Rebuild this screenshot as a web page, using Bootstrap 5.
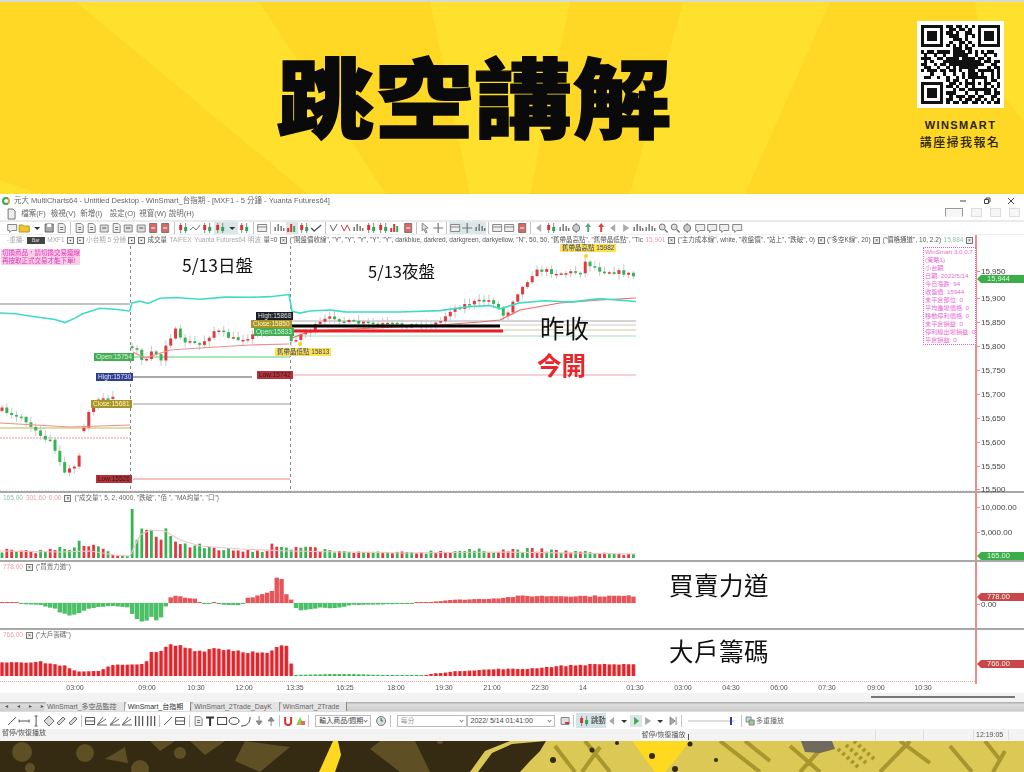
<!DOCTYPE html>
<html lang="zh-Hant">
<head>
    <meta charset="UTF-8">
    <title>跳空講解</title>
    <link href="https://cdn.jsdelivr.net/npm/bootstrap@5.3.3/dist/css/bootstrap.min.css" rel="stylesheet">
    <style>
        body { width: 1024px; height: 772px; overflow: hidden; background: #fff; font-family: "Liberation Sans", "Noto Sans CJK TC", sans-serif; }
        .hero { height: 194px; background: #ffd826; border-top: 2px solid #d8d8d8; }
        .hero-rays { position: absolute; inset: 0; width: 100%; height: 100%; }
        .hero-title { margin: 0 0 0 276px; font: 900 98px/1 "Noto Sans CJK TC", sans-serif; letter-spacing: 1px; color: #0a0a0a; -webkit-text-stroke: 1.6px #0a0a0a; transform: translateY(-4px) scaleY(.89); }
        .qr-block { width: 87px; margin: 0 20px 0 auto; color: #2b2410; transform: translateY(-13px); }
        .qr-box { background: #fff; padding: 4px; height: 87px; }
        .qr-box svg { display: block; width: 79px; height: 79px; }
        .qr-brand { font-size: 11px; font-weight: 700; letter-spacing: 1.4px; margin-top: 11px; line-height: 13px; white-space: nowrap; }
        .qr-cta { font: 500 12px/16px "Noto Sans CJK TC", sans-serif; letter-spacing: 1.4px; white-space: nowrap; margin: 2px 0 0 -1px; }

        .app { height: 547px; filter: blur(.35px); color: #666; font-size: 7px; line-height: 1; }
        .title-row { height: 13px; padding-left: 2px; font-size: 7.5px; }
        .logo-dot { width: 8px; height: 8px; border-radius: 50%; border: 2px solid #3aa655; border-right-color: #f0a020; margin-right: 4px; }
        .win-btns svg { width: 10px; height: 10px; margin-left: 14px; }
        .menu-row { height: 13px; font-size: 7.5px; padding-left: 5px; }
        .menu-row span { width: 29.5px; }
        .mdi-btns { margin-left: auto; margin-right: 4px; gap: 8px; transform: translateY(-1px); }
        .mdi-btns i { display: block; width: 11px; height: 9px; border: 1px solid #ddd; background: #f6f6f6; }
        .mdi-btns i:first-child { width: 18px; border-color: #999 #999 transparent #999; }
        .tool-row { height: 15px; padding-left: 6px; border-top: 2px solid #eaeaea; border-bottom: 1px solid #f0f0f0; }
        .tool-ic { width: 12.2px; height: 12px; display: block; flex: none; }
        .tool-row .tool-ic { width: 12.36px; }
        .tool-ic.on { background: #d9e6ea; }
        .tool-sep { flex: none; width: 1px; height: 12px; background: #c4c4c4; margin: 0 2px; }
        .info-row { height: 11px; padding-left: 7px; font-size: 6.5px; gap: 2.5px; white-space: nowrap; overflow: hidden; color: #555; position: relative; }
        .info-row::after { content: ""; position: absolute; left: 975px; top: 0; bottom: 0; width: 2px; background: #f48a8a; }
        .info-row .faint { color: #aaa; }
        .x-box { flex: none; width: 7px; height: 7px; border: 1px solid #777; background: #eee; font-size: 5px; line-height: 5px; text-align: center; color: #444; }
        .bar-pill { width: 18px; height: 7px; background: #444; color: #ddd; font-size: 5px; line-height: 7px; text-align: center; }

        .pane { border-bottom: 2px solid #a8a8a8; }
        .pane-main { height: 247px; }
        .pane-vol { height: 69px; }
        .pane-buy { height: 68px; }
        .pane-chip { height: 54px; border-bottom: 0; }
        .plot { width: 977px; flex: none; border-right: 2px solid #f48a8a; }
        .plot svg { display: block; width: 975px; height: 100%; }
        .axis { flex: 1; }
        .axis-tick { position: absolute; left: 4px; font-size: 8px; line-height: 8px; color: #444; }
        .axis-tick::before { content: ""; position: absolute; left: -4px; top: 3px; width: 3px; height: 1px; background: #f48a8a; }
        .axis-tag { position: absolute; left: 4px; right: 0; height: 8px; font-size: 7.5px; line-height: 8px; color: #e4f5e4; padding-left: 6px; }
        .axis-tag::before { content: ""; position: absolute; left: -4px; top: 0; border: 4px solid transparent; border-left: 0; border-right: 4px solid currentColor; }
        .tag-green { background: #3bae49; }
        .tag-green::before { color: #3bae49; }
        .tag-red { background: #c9474b; }
        .tag-red::before { color: #c9474b; }
        .pane-legend { position: absolute; left: 3px; top: 0; height: 10px; gap: 3px; font-size: 6.5px; color: #666; white-space: nowrap; }

        .px-label { position: absolute; height: 8px; padding: 0 2px; font-size: 6.5px; line-height: 8px; white-space: nowrap; }
        .lb-green { background: #43ad55; color: #d8f5d8; }
        .lb-navy { background: #2d3f8e; color: #e4e4f4; }
        .lb-gold { background: #a8952a; color: #fff6c8; }
        .lb-red { background: #b83038; color: #222; }
        .lb-dark { background: #1d1d28; color: #ddd; }
        .lb-yellow { background: #ffe24a; color: #2d3f8e; }
        .mark-dot { position: absolute; width: 4px; height: 4px; border-radius: 50%; background: #ffcf20; }
        .note-text { position: absolute; font-family: "Noto Sans CJK TC", sans-serif; color: #111; line-height: 1; white-space: nowrap; }
        .note-day { left: 182px; top: 10px; font-size: 17.5px; }
        .note-night { left: 368px; top: 17px; font-size: 16.5px; }
        .note-prev { left: 540px; top: 70px; font-size: 24.5px; }
        .note-open { left: 537px; top: 107px; font-size: 24.5px; font-weight: 700; color: #e8272c; }
        .note-wide { left: 669px; font-size: 24.5px; letter-spacing: .5px; }
        .warn-box { position: absolute; left: 1px; top: 3px; width: 79px; background: #f9cfe4; color: #df34c0; font-size: 6.5px; line-height: 8px; padding-left: 1px; }
        .trade-box { position: absolute; left: 923px; top: 1px; width: 53px; height: 98px; padding: 0 1px; border: 1px dotted #e95cc4; background: #fff; color: #e86ad0; font-size: 6.2px; line-height: 8px; white-space: nowrap; }

        .time-row { height: 9px; font-size: 7px; color: #555; }
        .time-row span { position: absolute; top: 0; transform: translateX(-50%); }
        .scroll-row { height: 9px; background: #f3f3f3; }
        .scroll-thumb { position: absolute; left: 871px; top: 3px; width: 144px; height: 2px; background: #777; }
        .tabs-row { height: 9px; background: linear-gradient(#aaa, #ddd 30%, #ccc); padding-left: 4px; font-size: 7px; color: #666; }
        .tab-arrows { width: 40px; gap: 7px; font-size: 5px; color: #555; }
        .sheet-tab { height: 9px; padding: 0 7px 0 3px; background: #e4e4e4; border-right: 1px solid #888; line-height: 9px; white-space: nowrap; clip-path: polygon(2px 0, 100% 0, 100% 100%, 0 100%); }
        .sheet-tab.active { background: #fff; color: #333; }
        .draw-row { height: 18px; padding-left: 6px; border-top: 1px solid #ddd; }
        .combo-box { flex: none; height: 12px; border: 1px solid #bbb; background: #fff; font-size: 7px; line-height: 10px; padding-left: 3px; color: #444; white-space: nowrap; position: relative; }
        .combo-box::after { content: ""; position: absolute; right: 3px; top: 3px; width: 3px; height: 3px; border: solid #888; border-width: 0 1px 1px 0; transform: rotate(45deg); }
        .hit-btn { flex: none; width: 30px; height: 15px; background: #d3e3e6; font-size: 7.5px; color: #333; gap: 1px; padding-left: 2px; white-space: nowrap; }
        .slide-track { flex: none; width: 47px; height: 2px; background: #ddd; position: relative; }
        .slide-thumb { position: absolute; right: 3px; top: -3px; width: 2px; height: 8px; background: #2d3f9e; }
        .status-row { height: 12px; background: #f3f3f3; font-size: 7px; padding-left: 2px; color: #555; }
        .status-cell { position: absolute; top: 1px; bottom: 1px; border-left: 1px solid #ddd; padding-left: 2px; line-height: 10px; }
        .tip-box { position: absolute; left: 640px; top: 0; width: 47px; height: 12px; background: #fafafa; line-height: 12px; text-align: center; }
        .tip-cursor { position: absolute; left: 688px; top: 5px; width: 1px; height: 6px; background: #555; }
        .strip { height: 31px; background: #352b12; }
        .strip svg { display: block; width: 100%; height: 100%; }
    </style>
</head>
<body>

    <!-- Yellow title banner -->
    <header class="hero position-relative d-flex align-items-center overflow-hidden">
        <svg class="hero-rays" viewBox="0 0 1024 192" preserveAspectRatio="none">
            <polygon fill="#ffe02c" points="76,0 259,0 386,192 308,192" />
            <polygon fill="#ffe02c" points="430,0 570,0 530,192 470,192" />
            <polygon fill="#ffe02c" points="683,0 830,0 745,192 630,192" />
            <polygon fill="#ffe02c" points="975,0 1024,0 1024,120 985,70" />
            <polygon fill="#ffe02c" points="0,178 40,192 0,192" />
        </svg>
        <h1 class="hero-title position-relative">跳空講解</h1>
        <div class="qr-block position-relative text-center">
            <div class="qr-box"><svg id="qr" viewBox="0 0 25 25" shape-rendering="crispEdges"></svg></div>
            <div class="qr-brand">WINSMART</div>
            <div class="qr-cta">講座掃我報名</div>
        </div>
    </header>

    <!-- MultiCharts window -->
    <main class="app d-flex flex-column">
        <div class="title-row d-flex align-items-center">
            <span class="logo-dot"></span>
            <span>元大 MultiCharts64 - Untitled Desktop - WinSmart_台指期 - [MXF1 - 5 分鐘 - Yuanta Futures64]</span>
            <div class="win-btns ms-auto me-2 d-flex">
                <svg viewBox="0 0 10 10"><path d="M2 5h6" stroke="#444" /></svg>
                <svg viewBox="0 0 10 10"><path d="M2.500 3.500h4v4h-4zM4 3.500V2h4v4H6.500" fill="none" stroke="#444" /></svg>
                <svg viewBox="0 0 10 10"><path d="M2 2l6 6M8 2l-6 6" stroke="#444" /></svg>
            </div>
        </div>
        <div class="menu-row d-flex align-items-center">
            <svg class="tool-ic me-1" viewBox="0 0 12 12"><path d="M3 1h5l2 2v8H3z" fill="#eee" stroke="#777" /></svg>
            <span>檔案(F)</span><span>檢視(V)</span><span>新增(I)</span><span>設定(O)</span><span>視窗(W)</span><span>說明(H)</span>
            <div class="mdi-btns d-flex"><i></i><i></i><i></i><i></i></div>
        </div>
        <div class="tool-row d-flex align-items-center" id="toolRow"></div>
        <div class="info-row d-flex align-items-center">
            <span class="faint">-重播-</span><span class="bar-pill">Bar</span><span class="faint">MXF1</span><span class="x-box">▪</span><span class="x-box">▪</span>
            <span class="faint">小台期 5 分鐘</span><span class="x-box">▪</span><span class="x-box">▪</span><span>成交量</span><span class="faint">TAIFEX</span><span class="faint">Yuanta Futures64</span><span class="faint">明波</span><span>量=0</span><span class="x-box">×</span>
            <span>("開盤價收線", "Y", "Y", "Y", "Y", "Y", darkblue, darkred, darkgreen, darkyellow, "N", 50, 50, "舊帶晶高點", "舊帶晶低點", "Tic</span><span class="text-danger opacity-50">15,901</span><span class="x-box">×</span>
            <span>("主力成本線", white, "收盤價", "站上", "跌破", 0)</span><span class="x-box">×</span><span>("多空K線", 20)</span><span class="x-box">×</span><span>("價格通道", 10, 2.2)</span><span class="text-success opacity-50">15,884</span><span class="x-box">×</span>
        </div>

        <section class="pane pane-main d-flex">
            <div class="plot position-relative">
                <svg id="mainPlot"></svg>
                <div class="warn-box">切換商品，請切換交易連線<br>再按取正式交易才能下單!</div>
                <span class="note-text note-day">5/13日盤</span>
                <span class="note-text note-night">5/13夜盤</span>
                <span class="note-text note-prev">昨收</span>
                <span class="note-text note-open">今開</span>
                <span class="px-label lb-green" style="left:94px;top:107px">Open:15754</span>
                <span class="px-label lb-navy" style="left:96px;top:127px">High:15730</span>
                <span class="px-label lb-gold" style="left:91px;top:154px">Close:15681</span>
                <span class="px-label lb-red" style="left:96px;top:229px">Low:15526</span>
                <span class="px-label lb-dark" style="left:256px;top:66px">High:15868</span>
                <span class="px-label lb-gold" style="left:251px;top:74px">Close:15850</span>
                <span class="px-label lb-green" style="left:254px;top:82px">Open:15833</span>
                <span class="px-label lb-red" style="left:257px;top:125px">Low:15742</span>
                <span class="px-label lb-yellow" style="left:275px;top:102px">舊帶晶低點 15813</span>
                <span class="px-label lb-yellow" style="left:560px;top:-2px">舊帶晶高點 15982</span>
                <i class="mark-dot" style="left:298px;top:96px"></i>
                <i class="mark-dot" style="left:584px;top:8px"></i>
                <div class="trade-box">WinSmart 3.0.0.7<br>(策略1)<br>小台期<br>日期: 2022/5/14<br>今日漲跌: 94<br>收盤價: 15944<br>未平倉部位: 0<br>平均進場價格: 0<br>移動停利價格: 0<br>未平倉損益: 0<br>停利線出場損益: 0<br>平倉損益: 0</div>
            </div>
            <div class="axis position-relative" id="mainAxis"><span class="axis-tag tag-green" style="top:29px">15,944</span></div>
        </section>

        <section class="pane pane-vol d-flex">
            <div class="plot position-relative">
                <svg id="volPlot"></svg>
                <div class="pane-legend d-flex align-items-center"><span class="text-success opacity-50">165.00</span><span class="text-danger opacity-50">301.60</span><span class="text-danger opacity-50">0.00</span><span class="x-box">×</span><span>("成交量", 5, 2, 4000, "跌破", "佰 ", "MA均量", "口")</span></div>
            </div>
            <div class="axis position-relative">
                <span class="axis-tick" style="top:11px">10,000.00</span>
                <span class="axis-tick" style="top:36px">5,000.00</span>
                <span class="axis-tag tag-green" style="top:59px">165.00</span>
            </div>
        </section>

        <section class="pane pane-buy d-flex">
            <div class="plot position-relative">
                <svg id="buyPlot"></svg>
                <div class="pane-legend d-flex align-items-center"><span class="text-danger opacity-50">778.00</span><span class="x-box">×</span><span>("買賣力道")</span></div>
                <span class="note-text note-wide" style="top:11px">買賣力道</span>
            </div>
            <div class="axis position-relative">
                <span class="axis-tag tag-red" style="top:31px">778.00</span>
                <span class="axis-tick" style="top:39px">0.00</span>
            </div>
        </section>

        <section class="pane pane-chip d-flex">
            <div class="plot position-relative">
                <svg id="chipPlot"></svg>
                <div class="pane-legend d-flex align-items-center"><span class="text-danger opacity-50">766.00</span><span class="x-box">×</span><span>("大戶籌碼")</span></div>
                <span class="note-text note-wide" style="top:9px">大戶籌碼</span>
            </div>
            <div class="axis position-relative"><span class="axis-tag tag-red" style="top:30px">766.00</span></div>
        </section>

        <div class="time-row position-relative" id="timeRow"></div>
        <div class="scroll-row position-relative"><div class="scroll-thumb"></div></div>
        <div class="tabs-row d-flex align-items-center">
            <div class="tab-arrows d-flex"><span>◄</span><span>◄</span><span>►</span><span>►</span></div>
            <span class="sheet-tab">WinSmart_多空品監控</span>
            <span class="sheet-tab active">WinSmart_台指期</span>
            <span class="sheet-tab">WinSmart_2Trade_DayK</span>
            <span class="sheet-tab">WinSmart_2Trade</span>
        </div>
        <div class="draw-row d-flex align-items-center" id="drawRow"></div>
        <div class="status-row position-relative">
            <span>暫停/恢復播放</span>
            <span class="status-cell" style="left:875px"></span>
            <span class="status-cell" style="left:923px"></span>
            <span class="status-cell" style="left:973px">12:19:05</span>
            <span class="status-cell" style="left:1008px"></span>
            <div class="tip-box">暫停/恢復播放</div>
            <i class="tip-cursor"></i>
        </div>
    </main>

    <!-- Circuit board strip at the bottom -->
    <footer class="strip">
        <svg viewBox="0 0 1024 31" preserveAspectRatio="none">
            <g fill="#5e4f24">
                <circle cx="22" cy="11" r="10" /><circle cx="85" cy="12" r="9" /><circle cx="140" cy="28" r="9" />
                <circle cx="180" cy="12" r="6" /><circle cx="30" cy="27" r="5" />
                <polygon points="190,0 225,0 205,14" /><polygon points="245,0 290,6 260,31 235,20" />
                <polygon points="150,0 175,0 160,10" /><polygon points="105,18 125,6 128,22" />
                <circle cx="440" cy="0" r="3" /><polygon points="370,8 400,31 430,31 415,0 380,0" />
            </g>
            <polygon fill="#ffd91f" points="333,0 338,0 341,14 335,31 319,31" />
            <polygon fill="#dcc855" points="470,31 485,10 510,0 1024,0 1024,31" />
            <polygon fill="#352b12" points="478,31 492,12 512,3 546,0 540,10 530,20 520,31" />
            <polygon fill="#ffd91f" points="632,0 690,0 676,18 665,31 655,31" />
            <g fill="none" stroke="#a8962e" stroke-width="4">
                <path d="M555 5l20 26M585 0l25 31M600 6l-18 25M720 0l40 31M745 0l25 20M790 5l30 26M800 31l28-31" />
                <path d="M880 31l30-31M900 0l30 22M950 5l22 26M985 0l16 20M1005 10l-12 21" />
                <path d="M838 8l20 18M846 4l20 18M854 0l20 18" stroke-dasharray="3 3" />
            </g>
            <polygon fill="#6f6a5c" points="801,0 832,0 835,8 820,12 805,11" />
            <g fill="#352b12"><circle cx="652" cy="15" r="3" /><circle cx="690" cy="3" r="2.500" /><circle cx="675" cy="28" r="3" /><circle cx="716" cy="19" r="2" /><circle cx="553" cy="19" r="3" /><circle cx="592" cy="9" r="2.500" /><circle cx="617" cy="2" r="2" /></g>
        </svg>
    </footer>

    <script src="https://cdn.jsdelivr.net/npm/bootstrap@5.3.3/dist/js/bootstrap.bundle.min.js"></script>
    <script>
        // QR modules read off the reference
        const QR = ["1111111011011010101111111","1000001001101101001000001","1011101011010011001011101","1011101001110010101011101","1011101000111010001011101","1000001001001101001000001","1111111010101010101111111","0000000000111011000000000","1011011110111101010101100","0100100100111110010010010","1110011011110111101101000","0101000111111111111011011","1100101101111111111100110","0110010010101111110001011","1011101101101001101111101","0001000100100101110100101","0110010010010101111110101","0000000010110010100010110","1111111001101011101011001","1000001011010010100010101","1011101000101101111111010","1011101011100010010011011","1011101001011101101100110","1000001011001011011010101","1111111010110110110101011"];
        document.getElementById("qr").innerHTML = QR.map((row, y) =>
            [...row].map((c, x) => c === "1" ? `<rect x="${x}" y="${y}" width="1.02" height="1.02" fill="#111"/>` : "").join("")).join("");

        // Small toolbar icons, 12x12 box
        const ICONS = {
            chat: '<path d="M1.500 2.500h9v6h-5l-2 2v-2h-2z" fill="#eee" stroke="#888"/>',
            folder: '<path d="M1 3h4l1 1h5v6H1z" fill="#f0c52c" stroke="#b8962a"/>',
            drop: '<path d="M3 5h6L6 8z" fill="#333"/>',
            save: '<path d="M2 2h8v8H2z" fill="#aaa" stroke="#666"/><path d="M4 2h4v3H4z" fill="#fff"/>',
            doc: '<path d="M3 1.500h5l2 2v7H3z" fill="#eee" stroke="#888"/><path d="M5 5.500h3M5 7.500h3" stroke="#777"/>',
            docr: '<path d="M2.500 1.500h7v9h-7z" fill="#d66" stroke="#777"/><path d="M4 6h4" stroke="#fff"/>',
            tray: '<path d="M2 3h8v7H2z" fill="#ddd" stroke="#888"/><path d="M4 6h4" stroke="#555"/>',
            candle: '<path d="M3.500 1v10M8.500 1v10" stroke="#888"/><path d="M2 3h3v5H2z" fill="#d33"/><path d="M7 5h3v4H7z" fill="#2a5"/>',
            zig: '<path d="M1 8l3-3 3 3 4-5" fill="none" stroke="#777"/>',
            zigr: '<path d="M1 3l3 6 3-6 3 6" fill="none" stroke="#d33"/>',
            vee: '<path d="M2 3l3 6 4-7" fill="none" stroke="#666"/>',
            check: '<path d="M1 6l3 3 7-6" fill="none" stroke="#555" stroke-width="1.300"/>',
            bars: '<path d="M2 9V5M5 9V2M8 9V4M10.500 9V6" stroke="#777" stroke-width="1.500"/>',
            barsc: '<path d="M2 10V6M5 10V2" stroke="#d33" stroke-width="2"/><path d="M8 10V4" stroke="#3a5" stroke-width="2"/>',
            cross: '<path d="M6 1v10M1 6h10" stroke="#777" stroke-width="1.200"/>',
            arrow: '<path d="M3 1l6 5-3 .5 2 4-1.500.5-2-4L3 9z" fill="#ddd" stroke="#888"/>',
            panel: '<path d="M1.500 2.500h9v7h-9z" fill="#eee" stroke="#888"/><path d="M1.500 5h9" stroke="#888"/>',
            bell: '<circle cx="6" cy="6" r="3.500" fill="#ccc" stroke="#777"/><path d="M6 1v2M6 9v2" stroke="#777"/>',
            green: '<path d="M6 1l3 4H7v5H5V5H3z" fill="#5a7"/>',
            red: '<path d="M6 1l3 4H7v5H5V5H3z" fill="#d44"/>',
            mag: '<circle cx="5" cy="5" r="3" fill="#ddd" stroke="#777"/><path d="M7.500 7.500l3 3" stroke="#777" stroke-width="1.500"/>',
            line: '<path d="M2 10l8-8" stroke="#555"/>',
            hline: '<path d="M1 6h10M1 4.500v3M11 4.500v3" stroke="#555"/>',
            vline: '<path d="M6 1v10M4.500 1h3M4.500 11h3" stroke="#555"/>',
            dia: '<path d="M6 1l5 5-5 5-5-5z" fill="#ddd" stroke="#666"/>',
            rule: '<path d="M2 8l6-6 2 2-6 6z" fill="#ddd" stroke="#666"/>',
            grid: '<path d="M1.500 2.500h9v7h-9zM1.500 6h9" fill="none" stroke="#555"/>',
            fan: '<path d="M1 10h10M1 10l9-6M1 10l6-8" fill="none" stroke="#666"/>',
            cols: '<path d="M2.500 1v10M6 1v10M9.500 1v10" stroke="#555" stroke-width="1.300"/>',
            text: '<path d="M2 2.500h8M6 2.500V11" stroke="#333" stroke-width="2"/>',
            rect: '<rect x="1.500" y="2.500" width="9" height="7" fill="none" stroke="#444"/>',
            ell: '<ellipse cx="6" cy="6" rx="5" ry="3.500" fill="none" stroke="#444"/>',
            arc: '<path d="M1 11c6 0 9-3 9-9" fill="none" stroke="#444"/>',
            down: '<path d="M6 1v6M3 6h6L6 10z" fill="#888" stroke="#888"/>',
            up: '<path d="M6 11V5M3 6h6L6 2z" fill="#888" stroke="#888"/>',
            magnet: '<path d="M3 2v5a3 3 0 0 0 6 0V2" fill="none" stroke="#d33" stroke-width="2"/>',
            paint: '<path d="M2 10l4-8 4 8z" fill="#9c4"/><path d="M7 6h4v4H7z" fill="#e66"/>',
            clock: '<circle cx="6" cy="6" r="4.500" fill="#cfe3e3" stroke="#777"/><path d="M6 3v3h2" fill="none" stroke="#555"/>',
            cal: '<path d="M2 2.500h8v7H2z" fill="#ddd" stroke="#888"/>',
            calr: '<path d="M2 2.500h8v7H2z" fill="#ddd" stroke="#888"/><path d="M6 8h4" stroke="#d33" stroke-width="2"/>',
            tri: '<path d="M8 2v8L3 6z" fill="#aaa"/>',
            play: '<path d="M4 2v8l5-4z" fill="#4a4"/>',
            next: '<path d="M3 2v8l6-4z" fill="#aaa"/>',
            end: '<path d="M3 2v8l5-4zM9 2v8" fill="#aaa" stroke="#888"/>',
            multi: '<path d="M2 2h5v5H2z" fill="#bde" stroke="#888"/><path d="M5 5h5v5H5z" fill="#9c8" stroke="#888"/>'
        };
        const iconTag = (name, on) => `<svg class="tool-ic${on ? " on" : ""}" viewBox="0 0 12 12">${ICONS[name] || ""}</svg>`;
        const SEP = '<i class="tool-sep"></i>';
        function toolbar(items) {
            return items.map(k => k === "|" ? SEP : typeof k === "string" && k.startsWith("<") ? k
                : k.endsWith("!") ? iconTag(k.slice(0, -1), true) : iconTag(k)).join("");
        }

        document.getElementById("toolRow").innerHTML = toolbar(["chat", "folder", "drop", "save", "doc", "|", "doc", "doc", "tray", "doc", "tray", "tray", "docr", "docr", "|",
            "candle", "zig", "candle", "candle!", "drop!", "candle", "|", "panel", "|", "bars", "barsc!", "candle", "check", "|",
            "vee", "zigr", "bars", "candle", "candle", "barsc", "docr", "|", "arrow", "cross", "|", "panel!", "cross!", "bars!", "|", "panel", "panel", "docr", "|",
            "tri", "candle", "bars", "bell", "green", "red", "tri", "next", "bars", "bars", "mag", "mag", "bell", "chat", "chat", "chat", "chat"]);

        document.getElementById("drawRow").innerHTML = toolbar(["line", "hline", "vline", "dia", "rule", "rule", "|", "grid", "fan", "fan", "fan", "cols", "cols", "|", "line", "grid", "|", "doc", "text", "rect", "ell", "arc", "down", "up", "|", "magnet", "paint", "|",
            '<span class="combo-box ms-1 me-1" style="width:56px">輸入商品/週期</span>', "clock", "|",
            '<span class="combo-box ms-1" style="width:70px;color:#999">每分</span>', '<span class="combo-box me-1" style="width:88px">2022/  5/14 01:41:00</span>', "calr", "|",
            `<span class="hit-btn d-flex align-items-center">${iconTag("candle")}跳動</span>`, "tri", "drop", "play!", "next", "drop", "end", "|",
            '<span class="slide-track mx-1"><i class="slide-thumb"></i></span>', "|", "multi", '<span class="text-nowrap">多重播放</span>']);

        // Time axis
        const TIMES = [[75, "03:00"], [147, "09:00"], [196, "10:30"], [244, "12:00"], [295, "13:35"], [345, "16:25"], [396, "18:00"], [444, "19:30"], [492, "21:00"], [540, "22:30"], [583, "14"], [635, "01:30"], [683, "03:00"], [731, "04:30"], [779, "06:00"], [827, "07:30"], [876, "09:00"], [923, "10:30"]];
        document.getElementById("timeRow").innerHTML = TIMES.map(t => `<span style="left:${t[0]}px">${t[1]}</span>`).join("");

        // Price axis: 24px per 50 points
        const TICKS = [["15,950", 272], ["15,900", 299], ["15,850", 323], ["15,800", 347], ["15,750", 371], ["15,700", 395], ["15,650", 419], ["15,600", 443], ["15,550", 467], ["15,500", 490]];
        document.getElementById("mainAxis").insertAdjacentHTML("beforeend", TICKS.map(t => `<span class="axis-tick" style="top:${t[1] - 250}px">${t[0]}</span>`).join(""));

        // Helpers for the plots
        let seed = 7;
        function rnd() { seed = (seed * 16807) % 2147483647; return seed / 2147483647; }
        function interp(pts, x) {
            if (x <= pts[0][0]) return pts[0][1];
            for (let i = 1; i < pts.length; i++) {
                if (x <= pts[i][0]) {
                    const [x0, y0] = pts[i - 1], [x1, y1] = pts[i];
                    return y0 + (y1 - y0) * (x - x0) / (x1 - x0);
                }
            }
            return pts[pts.length - 1][1];
        }
        function poly(pts, color, w) {
            return `<polyline fill="none" stroke="${color}" stroke-width="${w}" points="${pts.map(p => p.join(",")).join(" ")}"/>`;
        }
        function hline(x1, x2, y, color, w, dash) {
            return `<line x1="${x1}" x2="${x2}" y1="${y}" y2="${y}" stroke="${color}" stroke-width="${w || 1}"${dash ? ` stroke-dasharray="${dash}"` : ""}/>`;
        }
        const RED = "#e1393f", GREEN = "#35b552";

        // Main pane, page coordinates shifted by its top (246)
        const PRICE = [[2, 410], [15, 415], [25, 420], [35, 432], [50, 440], [58, 460], [65, 472], [78, 465], [85, 420], [90, 410], [97, 399], [112, 398],
            [133, 345], [140, 355], [145, 364], [150, 355], [155, 350], [160, 364], [165, 345], [175, 330], [180, 340], [200, 345], [215, 330], [235, 340], [255, 335], [270, 330], [285, 325], [290, 342],
            [300, 335], [310, 330], [325, 320], [335, 317], [345, 322], [370, 324], [400, 325], [430, 325], [440, 322], [450, 310], [470, 303], [492, 300], [500, 310], [505, 318], [515, 295], [525, 285], [530, 275], [540, 270], [560, 273], [580, 272], [585, 262], [600, 270], [625, 273], [636, 277]];
        let main = "";
        main += hline(0, 130, 304, "#888", 1.2);
        main += hline(0, 130, 428, "#b8c04a", 1.2) + hline(0, 130, 438, "#e59a9a", 1, "2 1");
        main += hline(133, 290, 357, "#8fdca4", 1.5) + hline(133, 252, 377, "#aaa", 2) + hline(133, 290, 404, "#ccc", 2) + hline(133, 290, 479, "#f08080", 1);
        main += hline(290, 636, 321, "#aaa", 1) + hline(290, 636, 325, "#ccc", 1) + hline(290, 636, 330, "#e0d080", 1) + hline(290, 636, 330, "#cde", .5) + hline(290, 636, 336, "#a8e0b4", 1) + hline(290, 636, 375, "#eba4ab", 1);
        main += `<line x1="130.500" x2="130.500" y1="246" y2="491" stroke="#888" stroke-dasharray="3 3"/><line x1="290.500" x2="290.500" y1="246" y2="491" stroke="#888" stroke-dasharray="3 3"/>`;

        let prev = null;
        for (let x = 2; x <= 636; x += 4.82) {
            if (x > 113 && x < 132) { prev = null; continue; }
            const close = interp(PRICE, x) + (rnd() - .5) * 5;
            const open = prev === null || Math.abs(prev - close) > 16 ? close + (rnd() - .5) * 8 : prev;
            const top = Math.min(open, close), bot = Math.max(open, close);
            const col = close < open ? RED : GREEN;
            main += `<line x1="${x}" x2="${x}" y1="${top - 1 - rnd() * 5}" y2="${bot + 1 + rnd() * 5}" stroke="#c9c9c9"/>`;
            main += `<rect x="${x - 1.500}" y="${top}" width="3" height="${Math.max(bot - top, 1.500)}" fill="${col}"/>`;
            prev = close;
        }
        main += poly([[0, 423], [70, 427], [100, 426], [130, 425]], "#f08d8d", 1.2);
        main += poly([[133, 352], [145, 358], [170, 350], [200, 348], [250, 345], [289, 344]], "#f08d8d", 1.2);
        main += poly([[292, 338], [310, 331], [440, 325], [480, 322], [500, 320], [520, 310], [560, 303], [600, 300], [636, 298]], "#ec6a6a", 1.2);
        const CYAN = [[0, 313], [15, 314], [40, 318], [55, 320], [65, 323], [75, 318], [82, 314], [100, 308], [115, 309], [129, 311], [130, 310], [132, 303], [140, 301], [148, 303], [160, 298], [175, 297], [200, 299], [225, 297], [250, 297], [270, 297], [289, 295], [292, 311], [300, 313], [310, 311], [330, 310], [345, 312], [400, 312], [440, 311], [470, 307], [490, 306], [500, 309], [520, 303], [545, 301], [570, 302], [600, 299], [636, 302]];
        main += poly(CYAN.map(p => [p[0], p[1] + (rnd() - .5)]), "#3fdcc4", 1.6);
        main += hline(292, 500, 326, "#000", 3) + hline(292, 503, 331, "#ee1c25", 3);
        main += hline(0, 975, 490.500, "#ddd", 1, "1 2");
        const mainEl = document.getElementById("mainPlot");
        mainEl.setAttribute("viewBox", "0 246 975 245");
        mainEl.innerHTML = main;

        // Bars of the lower panes
        const VOL = [[0, 8], [25, 6], [55, 8], [58, 18], [62, 7], [75, 9], [79, 15], [85, 10], [95, 11], [105, 7], [115, 3], [128, 2], [132, 50], [137, 18], [142, 30], [147, 28], [152, 28], [157, 20], [162, 18], [167, 33], [172, 18], [180, 14], [190, 12], [205, 11], [230, 8], [268, 8], [271, 20], [276, 12], [290, 8], [296, 10], [340, 6], [400, 5], [450, 7], [530, 8], [600, 5], [636, 3]];
        let vol = "";
        for (let x = 2; x <= 636; x += 4.82) {
            const h = interp(VOL, x) * (x > 125 && x < 175 ? 1 : .7 + rnd() * .6);
            vol += `<rect x="${x - 1.400}" y="${558 - h}" width="2.800" height="${h}" fill="${rnd() < .52 ? RED : GREEN}"/>`;
        }
        vol += poly([[0, 551], [60, 552], [90, 551], [115, 555], [130, 556], [140, 535], [150, 530], [165, 531], [180, 540], [200, 546], [240, 549], [290, 551], [400, 553], [500, 552], [636, 554]], "#f5c4c8", 1.2);
        const volEl = document.getElementById("volPlot");
        volEl.setAttribute("viewBox", "0 493 975 67");
        volEl.innerHTML = vol;

        // Signed values, positive is up
        const BUY = [[0, 1], [18, 1], [22, -1], [40, -2], [55, -6], [65, -12], [75, -11], [90, -5], [110, -3], [130, -5], [134, -16], [145, -21], [150, -12], [158, -20], [165, -9], [167, 4], [175, 7], [197, 4], [200, 0], [205, -1], [215, 1], [225, -2], [242, -2], [248, 5], [258, 7], [265, 9], [272, 12], [276, 25], [282, 22], [286, 9], [290, 13], [292, -3], [300, -7], [320, -5], [340, -5], [350, -2], [400, -1], [430, 1], [450, 3], [480, 4], [500, 5], [520, 7], [580, 7], [636, 7]];
        let buy = hline(0, 636, 603, "#e8e8e8", 1);
        for (let x = 2; x <= 636; x += 4.82) {
            const v = interp(BUY, x) * (.9 + rnd() * .2);
            const h = Math.max(Math.abs(v), 1);
            buy += `<rect x="${x - 2.200}" y="${v > 0 ? 603 - h : 603}" width="4.400" height="${h}" fill="${v > 0 ? "#e55559" : "#4cc066"}"/>`;
        }
        const buyEl = document.getElementById("buyPlot");
        buyEl.setAttribute("viewBox", "0 562 975 66");
        buyEl.innerHTML = buy;

        const CHIP = [[0, 14], [40, 14], [65, 10], [72, 6], [80, 4], [90, 5], [100, 5], [110, 11], [140, 11], [146, 14], [150, 25], [158, 22], [165, 28], [172, 31], [180, 30], [200, 25], [215, 28], [250, 24], [268, 22], [276, 28], [288, 31], [290, 31], [292, -1], [340, -2], [380, -1], [420, -1], [430, 2], [460, 5], [500, 7], [525, 7], [560, 10], [600, 12], [636, 11]];
        let chip = hline(0, 975, 681.500, "#f4a9a9", 1, "1 1");
        for (let x = 2; x <= 636; x += 4.82) {
            const v = interp(CHIP, x) * (.94 + rnd() * .12);
            const h = Math.max(Math.abs(v), 1);
            chip += `<rect x="${x - 2.400}" y="${676 - h}" width="4.800" height="${h}" fill="${v > 0 ? "#f6b5b8" : "#a8e0b4"}"/>`;
            chip += `<rect x="${x - 1.500}" y="${676 - h}" width="3" height="${h}" fill="${v > 0 ? "#e0262d" : GREEN}"/>`;
        }
        const chipEl = document.getElementById("chipPlot");
        chipEl.setAttribute("viewBox", "0 630 975 54");
        chipEl.innerHTML = chip;
    </script>

</body>
</html>
